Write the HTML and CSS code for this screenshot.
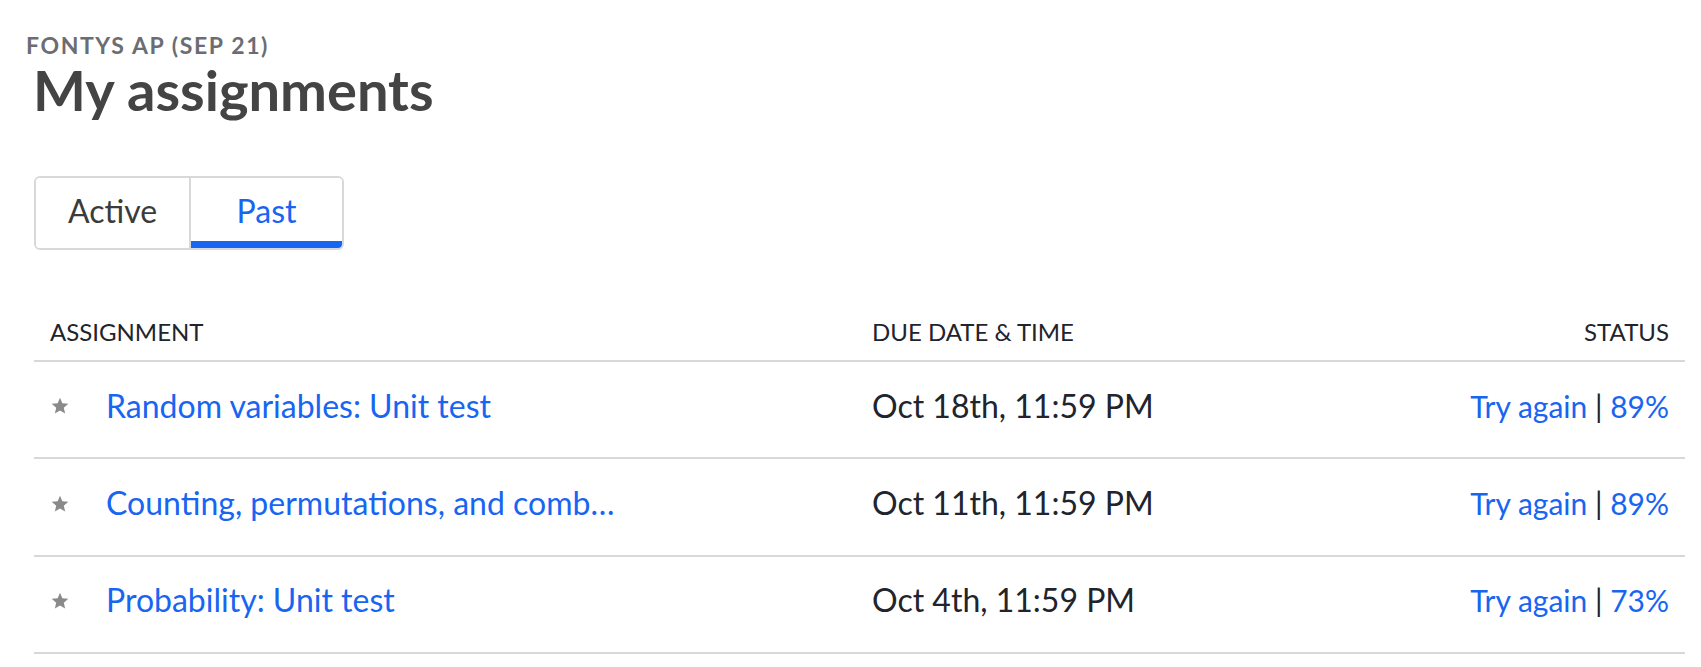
FILE: index.html
```html
<!DOCTYPE html>
<html lang="en">
<head>
<meta charset="utf-8">
<title>My assignments</title>
<link rel="stylesheet" href="styles.css">
</head>
<body>
<main class="page">
  <header class="page-head">
    <div class="class-name">FONTYS AP (SEP 21)</div>
    <h1 class="title">My assignments</h1>
  </header>

  <nav class="tabs">
    <button class="tab">Active</button>
    <button class="tab tab-selected">Past</button>
  </nav>

  <section class="table">
    <div class="row row-head">
      <div class="cell cell-name">ASSIGNMENT</div>
      <div class="cell cell-date">DUE DATE &amp; TIME</div>
      <div class="cell cell-status">STATUS</div>
    </div>

    <div class="row">
      <div class="cell cell-name">
        <svg class="star" viewBox="0 0 24 24" aria-hidden="true"><path d="M12 17.27L18.18 21l-1.64-7.03L22 9.24l-7.19-.61L12 2 9.19 8.63 2 9.24l5.46 4.73L5.82 21z"/></svg>
        <a class="link" href="#">Random variables: Unit test</a>
      </div>
      <div class="cell cell-date">Oct 18th, 11:59 PM</div>
      <div class="cell cell-status"><a class="link" href="#">Try again</a> | <a class="link" href="#">89%</a></div>
    </div>

    <div class="row">
      <div class="cell cell-name">
        <svg class="star" viewBox="0 0 24 24" aria-hidden="true"><path d="M12 17.27L18.18 21l-1.64-7.03L22 9.24l-7.19-.61L12 2 9.19 8.63 2 9.24l5.46 4.73L5.82 21z"/></svg>
        <a class="link" href="#">Counting, permutations, and comb…</a>
      </div>
      <div class="cell cell-date">Oct 11th, 11:59 PM</div>
      <div class="cell cell-status"><a class="link" href="#">Try again</a> | <a class="link" href="#">89%</a></div>
    </div>

    <div class="row">
      <div class="cell cell-name">
        <svg class="star" viewBox="0 0 24 24" aria-hidden="true"><path d="M12 17.27L18.18 21l-1.64-7.03L22 9.24l-7.19-.61L12 2 9.19 8.63 2 9.24l5.46 4.73L5.82 21z"/></svg>
        <a class="link" href="#">Probability: Unit test</a>
      </div>
      <div class="cell cell-date">Oct 4th, 11:59 PM</div>
      <div class="cell cell-status"><a class="link" href="#">Try again</a> | <a class="link" href="#">73%</a></div>
    </div>
  </section>
</main>
</body>
</html>
```

FILE: styles.css
```css
* {
  box-sizing: border-box;
}

html, body {
  margin: 0;
  padding: 0;
  background: #ffffff;
}

body {
  font-family: "Lato", "Liberation Sans", sans-serif;
  color: #21242c;
}

.page {
  padding: 0 16px 0 34px;
}

.page-head {
  padding-top: 32px;
}

.class-name {
  margin-left: -8px;
  font-size: 23px;
  line-height: 26px;
  font-weight: 700;
  letter-spacing: 1.6px;
  color: #6b6d72;
}

.title {
  margin: 4px 0 0 -1px;
  font-size: 56px;
  line-height: 56px;
  font-weight: 700;
  color: #444444;
}

.tabs {
  display: inline-flex;
  margin-top: 58px;
  border: 2px solid #d6d8da;
  border-radius: 6px;
  overflow: hidden;
}

.tab {
  width: 153px;
  height: 70px;
  padding: 0 0 5px 0;
  border: 0;
  background: #ffffff;
  font-family: inherit;
  font-size: 32px;
  color: #3b3b3b;
  display: flex;
  align-items: center;
  justify-content: center;
}

.tab + .tab {
  border-left: 2px solid #d6d8da;
}

.tab-selected {
  color: #1865f2;
  box-shadow: inset 0 -7px 0 #1865f2;
}

.table {
  margin-top: 68px;
}

.row {
  display: grid;
  grid-template-columns: 838px 1fr auto;
  align-items: center;
  height: 97.4px;
  padding: 0 16px 8px 0;
  border-bottom: 2px solid #d6d8da;
}

.row-head {
  height: auto;
  padding-bottom: 14px;
  align-items: end;
}

.row-head .cell {
  font-size: 24px;
  line-height: 28px;
  color: #21242c;
}

.row-head .cell-name {
  padding-left: 16px;
}

.cell {
  font-size: 32px;
  line-height: 38px;
  white-space: nowrap;
}

.cell-name {
  display: flex;
  align-items: center;
  padding-left: 16px;
}

.cell-status {
  text-align: right;
  font-size: 30px;
}

.star {
  width: 20px;
  height: 20px;
  fill: #8a8a8a;
  margin-right: 36px;
  margin-top: 1px;
}

.link {
  color: #1865f2;
  text-decoration: none;
}
```
